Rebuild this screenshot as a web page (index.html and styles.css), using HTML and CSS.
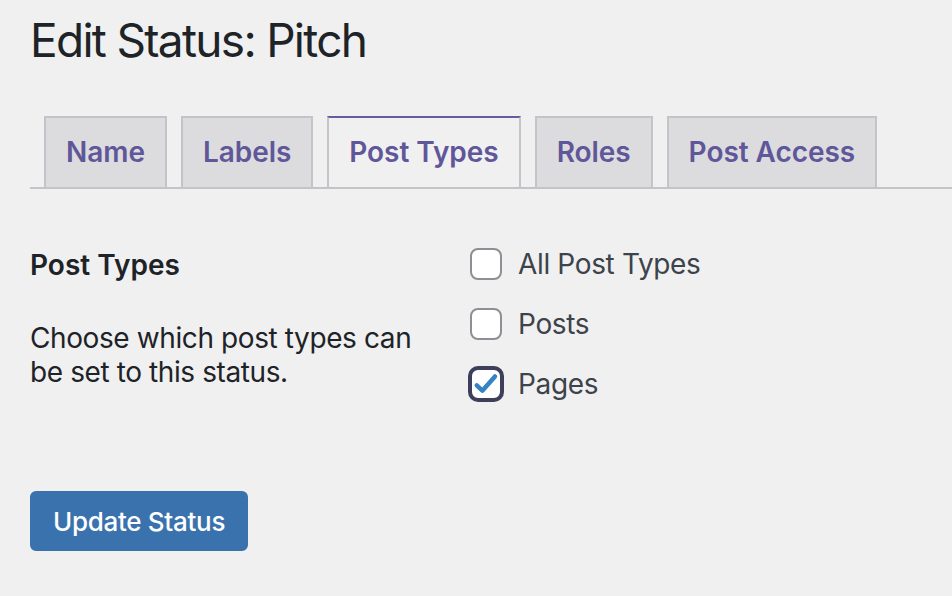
FILE: index.html
```html
<!DOCTYPE html>
<html lang="en">
<head>
<meta charset="utf-8">
<title>Edit Status: Pitch</title>
<link rel="stylesheet" href="styles.css">
</head>
<body>
<div class="wrap">
  <h1 class="title">Edit Status: Pitch</h1>
  <nav class="tabs">
    <a class="tab">Name</a>
    <a class="tab">Labels</a>
    <a class="tab tab-active">Post Types</a>
    <a class="tab">Roles</a>
    <a class="tab">Post Access</a>
  </nav>
  <div class="form-row">
    <div class="th">
      <div class="th-label">Post Types</div>
      <p class="desc">Choose which post types can be set to this status.</p>
    </div>
    <div class="td">
      <label class="check"><span class="box"></span><span>All Post Types</span></label>
      <label class="check"><span class="box"></span><span>Posts</span></label>
      <label class="check"><span class="box box-checked"><svg viewBox="0 0 20 20" width="28" height="28"><path d="M3.4 11 L7.4 14.8 L16.4 4.6" fill="none" stroke="#3582c4" stroke-width="3.2" stroke-linecap="round" stroke-linejoin="round"/></svg></span><span>Pages</span></label>
    </div>
  </div>
  <button class="btn">Update Status</button>
</div>
</body>
</html>
```

FILE: styles.css
```css
html, body {
  margin: 0;
  padding: 0;
  background: #f0f0f1;
}
body {
  font-family: Inter, "Noto Sans", sans-serif;
  color: #1d2327;
}
.wrap {
  padding: 10px 0 0 30px;
}
.title {
  margin: 0;
  font-size: 46px;
  font-weight: 400;
  line-height: 60px;
  letter-spacing: -1.7px;
  color: #1d2327;
}
.tabs {
  display: flex;
  margin-top: 46px;
  border-bottom: 2px solid #c3c4c7;
}
.tab {
  margin-left: 14px;
  padding: 10px 20px 11px;
  border: 2px solid #c3c4c7;
  border-bottom: none;
  background: #dcdcde;
  font-size: 28px;
  font-weight: 600;
  line-height: 48px;
  letter-spacing: -0.05px;
  color: #5f5799;
}
.tab-active {
  background: #f0f0f1;
  border-top-color: #635c9d;
}
.form-row {
  display: flex;
  margin-top: 59px;
}
.th {
  width: 400px;
  padding-right: 20px;
}
.th-label {
  font-size: 28px;
  font-weight: 600;
  line-height: 34px;
}
.desc {
  margin: 39px 0 0;
  font-size: 28px;
  line-height: 34px;
  letter-spacing: -0.4px;
  width: 400px;
}
.td {
  padding-left: 20px;
  display: flex;
  flex-direction: column;
  gap: 28px;
}
.check {
  display: flex;
  align-items: center;
  font-size: 28px;
  line-height: 32px;
  letter-spacing: -0.35px;
  color: #3c434a;
}
.box {
  box-sizing: border-box;
  width: 32px;
  height: 32px;
  margin-right: 16px;
  border: 2px solid #8c8f94;
  border-radius: 8px;
  background: #fff;
  display: flex;
  align-items: center;
  justify-content: center;
}
.box-checked {
  border: 2px solid #3d3f5c;
  box-shadow: 0 0 0 2px #3d3f5c;
}
.btn {
  display: block;
  margin-top: 91px;
  height: 60px;
  padding: 0 21px;
  border: 2px solid #3a72ad;
  border-radius: 6px;
  background: #3a72ad;
  color: #fff;
  font-family: Inter, "Noto Sans", sans-serif;
  font-size: 26px;
  font-weight: 500;
  letter-spacing: -0.3px;
}
```
